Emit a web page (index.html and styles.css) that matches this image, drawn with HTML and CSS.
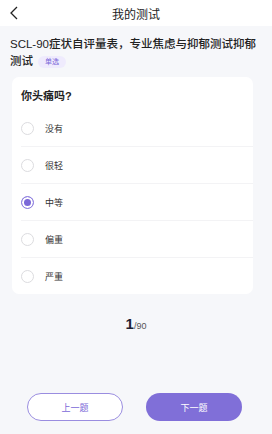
FILE: index.html
```html
<!DOCTYPE html>
<html lang="zh">
<head>
    <meta charset="UTF-8">
    <meta name="viewport" content="width=device-width, initial-scale=1.0">
    <title>我的测试</title>
    <link rel="stylesheet" href="styles.css">
</head>
<body>

<header class="topbar">
    <span class="back">
        <svg width="10" height="14" viewBox="0 0 10 14"><path d="M8 1 L2 7 L8 13" fill="none" stroke="#222" stroke-width="1.3"/></svg>
    </span>
    <h1>我的测试</h1>
</header>

<div class="page">
    <div class="test-title">
        <span class="name">SCL-90症状自评量表，专业焦虑与抑郁测试抑郁测试</span><span class="tag">单选</span>
    </div>

    <div class="card">
        <div class="question">你头痛吗?</div>
        <div class="option"><span class="radio"></span>没有</div>
        <div class="option"><span class="radio"></span>很轻</div>
        <div class="option"><span class="radio checked"></span>中等</div>
        <div class="option"><span class="radio"></span>偏重</div>
        <div class="option"><span class="radio"></span>严重</div>
    </div>

    <div class="counter"><b>1</b>/90</div>

    <div class="actions">
        <button class="btn prev">上一题</button>
        <button class="btn next">下一题</button>
    </div>
</div>

</body>
</html>
```

FILE: styles.css
```css
body {
    font-family: "Liberation Sans", "Noto Sans CJK SC", sans-serif;
    background-color: #f6f7fa;
    margin: 0;
    padding: 0;
    width: 272px;
    height: 434px;
    display: flex;
    flex-direction: column;
    color: #222;
}
.topbar {
    background-color: #ffffff;
    height: 26px;
    display: flex;
    align-items: center;
    justify-content: center;
    position: relative;
}
.topbar h1 {
    margin: 0;
    font-size: 12px;
    font-weight: 400;
    color: #222;
}
.back {
    position: absolute;
    left: 9px;
    top: 6px;
    display: flex;
}
.page {
    flex: 1;
    display: flex;
    flex-direction: column;
}
.test-title {
    padding: 10px 8px 0 10px;
    font-size: 11.5px;
    line-height: 17px;
    font-weight: 500;
    color: #222;
}
.test-title .tag {
    display: inline-block;
    margin-left: 5px;
    padding: 0 7px;
    height: 12px;
    line-height: 12px;
    font-size: 7px;
    font-weight: 400;
    color: #7b68d8;
    background-color: #efebfd;
    border-radius: 6px;
    vertical-align: 1px;
}
.card {
    background-color: #ffffff;
    margin: 7px 0 0 12px;
    width: 241px;
    border-radius: 7px;
    padding: 10px 0 0 9px;
    box-sizing: border-box;
}
.question {
    font-size: 11px;
    font-weight: 600;
    line-height: 18px;
    height: 23px;
    color: #222;
}
.option {
    display: flex;
    align-items: center;
    height: 36px;
    font-size: 9px;
    color: #333;
    border-bottom: 1px solid #f3f3f5;
}
.option:last-child {
    border-bottom: none;
}
.radio {
    width: 13px;
    height: 13px;
    border: 1px solid #dcdcdf;
    border-radius: 50%;
    margin-right: 11px;
    box-sizing: border-box;
}
.radio.checked {
    border: 1px solid #8f80e0;
    background-color: #7b68d8;
    box-shadow: inset 0 0 0 2px #ffffff;
}
.counter {
    text-align: center;
    margin-top: 21px;
    font-size: 9px;
    color: #555;
}
.counter b {
    font-size: 15px;
    color: #1f2233;
}
.actions {
    margin-top: auto;
    display: flex;
    justify-content: space-between;
    padding: 0 30px 13px 27px;
}
.btn {
    width: 96px;
    height: 28px;
    border-radius: 14px;
    font-family: "Noto Sans CJK SC", sans-serif;
    font-size: 9px;
    cursor: pointer;
}
.btn.prev {
    background-color: #ffffff;
    border: 1px solid #9a8de0;
    color: #7b68d8;
}
.btn.next {
    background-color: #806fd8;
    border: none;
    color: #ffffff;
}
```
